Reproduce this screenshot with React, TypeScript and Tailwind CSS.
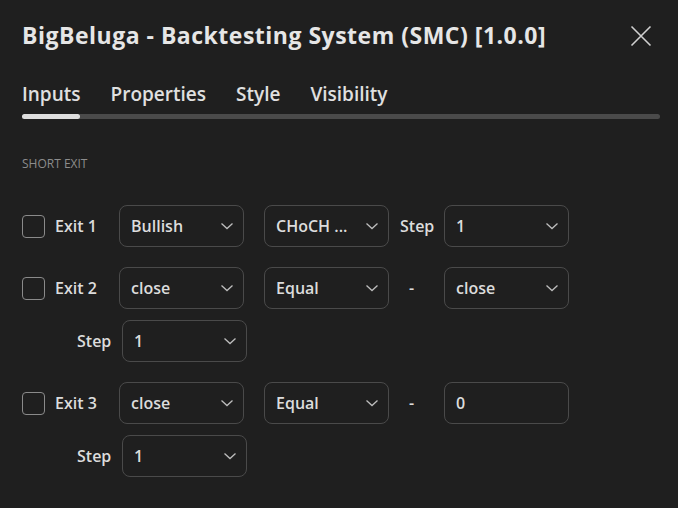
import React from "react";

const Chevron = () => (
  <svg width="14" height="8" viewBox="0 0 14 8" fill="none" className="shrink-0">
    <path d="M1.5 1.5 L7 6.5 L12.5 1.5" stroke="#bdbdbd" strokeWidth="1.3" />
  </svg>
);

const Select = ({ value, chevron = true, className = "" }: { value: string; chevron?: boolean; className?: string }) => (
  <div
    className={`flex h-[42px] w-[125px] items-center justify-between rounded-[8px] border border-[#4a4a4a] pl-[11px] pr-[9px] text-[16px] font-semibold text-[#dcdcdc] ${className}`}
  >
    <span>{value}</span>
    {chevron && <Chevron />}
  </div>
);

const Checkbox = () => (
  <div className="h-[23px] w-[23px] rounded-[4px] border border-[#8a8a8a]" />
);

export default function App() {
  return (
    <div
      className="h-[508px] w-[678px] bg-[#1f1f1f] text-[#dcdcdc]"
      style={{ fontFamily: '"Open Sans", "Noto Sans", sans-serif' }}
    >
      <div className="flex items-center justify-between pl-[22px] pr-[26px] pt-[19px]">
        <div className="text-[23px] font-bold leading-[32px] tracking-[0.5px] text-[#e6e6e6]">
          BigBeluga - Backtesting System (SMC) [1.0.0]
        </div>
        <svg width="22" height="22" viewBox="0 0 22 22" className="mt-[2px]">
          <path d="M1.5 1.5 L20.5 20.5 M20.5 1.5 L1.5 20.5" stroke="#d0d0d0" strokeWidth="1.6" />
        </svg>
      </div>

      <div className="mt-[30px] flex gap-[30px] pl-[22px] text-[19px] font-semibold leading-[26px] text-[#e0e0e0]">
        <span>Inputs</span>
        <span>Properties</span>
        <span>Style</span>
        <span>Visibility</span>
      </div>
      <div className="ml-[22px] mt-[7px] flex h-[5px] w-[638px] rounded-full bg-[#4a4a4a]">
        <div className="h-[5px] w-[58px] rounded-full bg-[#dedede]" />
      </div>

      <div className="ml-[22px] mt-[37px] text-[12px] leading-[16px] text-[#8c8c8c]">SHORT EXIT</div>

      <div className="mt-[33px] flex flex-col pl-[22px]">
        <div className="flex items-center">
          <Checkbox />
          <span className="ml-[10px] w-[64px] text-[16px] font-semibold">Exit 1</span>
          <Select value="Bullish" />
          <Select value="CHoCH ..." className="ml-[20px]" />
          <span className="ml-[11px] w-[44px] text-[16px] font-semibold">Step</span>
          <Select value="1" />
        </div>

        <div className="mt-[20px] flex items-center">
          <Checkbox />
          <span className="ml-[10px] w-[64px] text-[16px] font-semibold">Exit 2</span>
          <Select value="close" />
          <Select value="Equal" className="ml-[20px]" />
          <span className="w-[55px] pl-[20px] text-[16px] font-semibold">-</span>
          <Select value="close" />
        </div>
        <div className="mt-[11px] flex items-center">
          <span className="ml-[55px] w-[45px] text-[16px] font-semibold">Step</span>
          <Select value="1" />
        </div>

        <div className="mt-[20px] flex items-center">
          <Checkbox />
          <span className="ml-[10px] w-[64px] text-[16px] font-semibold">Exit 3</span>
          <Select value="close" />
          <Select value="Equal" className="ml-[20px]" />
          <span className="w-[55px] pl-[20px] text-[16px] font-semibold">-</span>
          <Select value="0" chevron={false} />
        </div>
        <div className="mt-[11px] flex items-center">
          <span className="ml-[55px] w-[45px] text-[16px] font-semibold">Step</span>
          <Select value="1" />
        </div>
      </div>
    </div>
  );
}
